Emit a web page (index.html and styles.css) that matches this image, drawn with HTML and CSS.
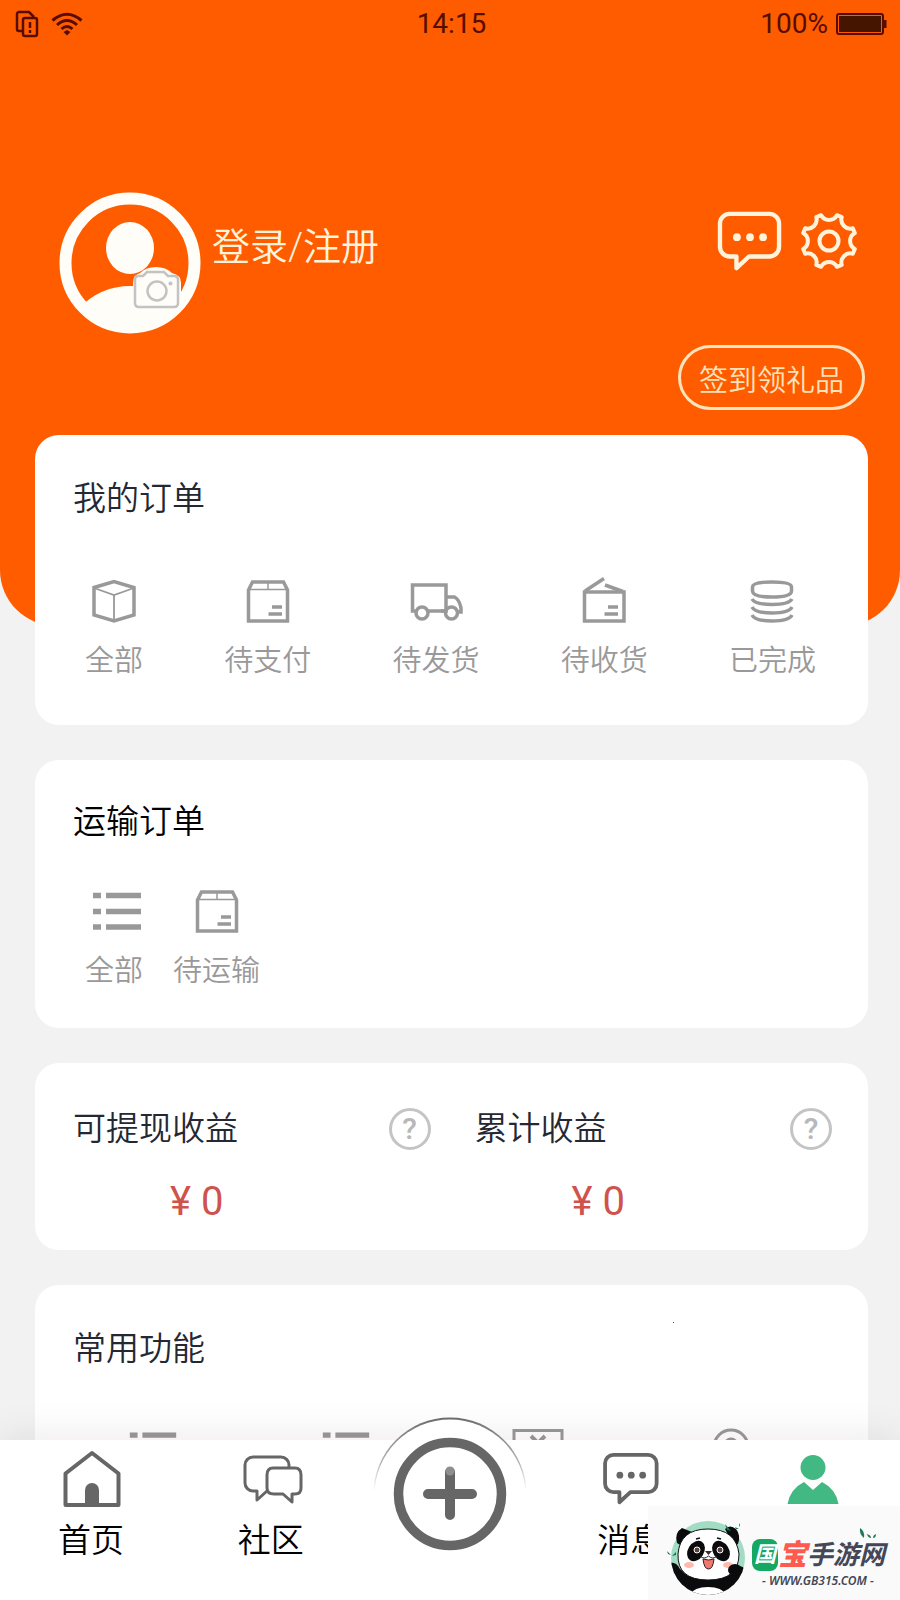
FILE: index.html
```html
<!DOCTYPE html>
<html lang="zh-CN">
<head>
<meta charset="utf-8">
<meta name="viewport" content="width=device-width, initial-scale=1">
<title>我的</title>
<link rel="stylesheet" href="styles.css">
</head>
<body>
<svg class="defs" aria-hidden="true">
  <symbol id="box" viewBox="0 0 56 56">
    <path d="M8.500 17 12.500 9h31l4 8v31h-39z" fill="none" stroke="currentColor" stroke-width="3.500"/>
    <path d="M8 16.500h40M28 9v7.500" fill="none" stroke="currentColor" stroke-width="1.500"/>
    <path d="M32 34h10M28.500 41H42" stroke="currentColor" stroke-width="3.500"/>
  </symbol>
  <symbol id="list" viewBox="0 0 56 56">
    <path d="M7 12.500h8M20 12.500h35M7 28.500h8M20 28.500h35M7 44h8M20 44h35" stroke="currentColor" stroke-width="5.500"/>
  </symbol>
  <symbol id="bubble" viewBox="0 0 68 64">
    <path d="M13 4h41a10 10 0 0 1 10 10v24a10 10 0 0 1-10 10H33L20 60V48h-7A10 10 0 0 1 3 38V14A10 10 0 0 1 13 4z" fill="none" stroke="currentColor" stroke-width="4.500" stroke-linejoin="round"/>
    <g fill="currentColor"><circle cx="20.500" cy="28" r="4"/><circle cx="34" cy="28" r="4"/><circle cx="47.500" cy="28" r="4"/></g>
  </symbol>
</svg>

<div class="app">
  <div class="scroll">
    <header class="header">
      <div class="status">
        <span class="status-left">
          <svg width="22" height="26" viewBox="0 0 22 26" fill="none" stroke="currentColor" stroke-width="2.500">
            <path d="M6 20H3a2 2 0 0 1-2-2V3a2 2 0 0 1 2-2h10l5 5"/><rect x="7" y="7" width="14" height="18" rx="2"/><path d="M14 11v6M14 19v3"/>
          </svg>
          <svg width="32" height="24" viewBox="0 0 32 24" fill="none" stroke="currentColor" stroke-width="3">
            <path d="M1.500 8.500Q16-4 30.500 8.500M6 13Q16 4 26 13M10.500 17Q16 12 21.500 17"/><path d="M16 18 19.500 20 16 23.500 12.500 20z" fill="currentColor" stroke="none"/>
          </svg>
        </span>
        <time class="clock">14:15</time>
        <span class="status-right">100%
          <svg width="51" height="22" viewBox="0 0 51 22"><rect x="1" y="1" width="46" height="20" rx="2" fill="none" stroke="currentColor" stroke-width="2"/><rect x="3" y="3" width="42" height="16" fill="#451500"/><path d="M48 7h2.500v8H48z" fill="currentColor"/></svg>
        </span>
      </div>
      <div class="profile">
        <button class="avatar" type="button" aria-label="更换头像">
          <svg width="142" height="142" viewBox="0 0 142 142">
            <defs><clipPath id="face"><circle cx="71" cy="71" r="66"/></clipPath></defs>
            <circle cx="71" cy="71" r="64.500" fill="none" stroke="#fffdf8" stroke-width="12"/>
            <ellipse cx="71" cy="56" rx="24" ry="26" fill="#fffdf8"/>
            <path d="M20 116Q42 94 71 94t51 22v26H20z" fill="#fffdf8" clip-path="url(#face)"/>
            <path d="M74 91q0-8 7-10 6-6 16-6t16 6q9 2 9 10v25H74z" fill="#fffdf8"/>
            <path d="M79 84h5l4-4h17l4 4h6q4 0 4 4v23q0 4-4 4H80q-4 0-4-4V88q0-4 3-4z" fill="none" stroke="#c3c3c3" stroke-width="2.500"/>
            <circle cx="98" cy="99" r="9.500" fill="none" stroke="#c3c3c3" stroke-width="2.500"/><circle cx="111.500" cy="91.500" r="2" fill="#c3c3c3"/>
          </svg>
        </button>
        <a class="login" href="#login">登录/注册</a>
        <div class="actions">
          <button type="button" aria-label="消息"><svg width="66" height="62"><use href="#bubble"/></svg></button>
          <button type="button" aria-label="设置">
            <svg width="60" height="60" viewBox="0 0 60 60" fill="none" stroke="currentColor" stroke-width="4" stroke-linejoin="round">
              <path d="M55.800 37.900 53.800 42.700A9 9 0 0 0 42.700 53.800L37.900 55.800A9 9 0 0 0 22.100 55.800L17.300 53.800A9 9 0 0 0 6.200 42.700L4.200 37.900A9 9 0 0 0 4.200 22.100L6.200 17.300A9 9 0 0 0 17.300 6.200L22.100 4.200A9 9 0 0 0 37.900 4.200L42.700 6.200A9 9 0 0 0 53.800 17.300L55.800 22.100A9 9 0 0 0 55.800 37.900z"/>
              <circle cx="30" cy="30" r="9.500"/>
            </svg>
          </button>
        </div>
      </div>
      <button class="checkin" type="button">签到领礼品</button>
    </header>

    <main class="cards">
      <section class="card orders">
        <h2>我的订单</h2>
        <nav class="links spread">
          <a href="#all"><svg viewBox="0 0 56 56" fill="none" stroke="currentColor" stroke-width="3.500"><path d="M8 14.500 28 8.500 48 14.500v27.500L28 48 8 42z"/><path d="M8 15 28 22 48 15M28 22v25" stroke-width="1.800"/></svg>全部</a>
          <a href="#pay"><svg><use href="#box"/></svg>待支付</a>
          <a href="#ship"><svg viewBox="0 0 56 56" fill="none" stroke="currentColor" stroke-width="3.500"><path d="M7 38H4.500V12H38v26H20"/><path d="M38 24h8.500Q51 26 53 35v4h-3M33 38h4"/><circle cx="14" cy="40" r="6"/><circle cx="43.500" cy="40" r="6"/></svg>待发货</a>
          <a href="#receive"><svg viewBox="0 0 56 56" fill="none" stroke="currentColor" stroke-width="3.500"><rect x="8.500" y="19" width="39.500" height="29"/><path d="M9 18 28 5.500M29 12 47 18.500"/><path d="M32 34h10M28.500 41H42"/></svg>待收货</a>
          <a href="#done"><svg viewBox="0 0 56 56" fill="none" stroke="currentColor" stroke-width="3.500"><path d="M8.500 14q0-5 19.500-5t19.500 5v4q0 6-19.500 6t-19.500-6z"/><path d="M8 26q3 5.500 20 5.500t20-5.500M8 34q3 6 20 6t20-6M8 42q3 6 20 6t20-6"/></svg>已完成</a>
        </nav>
      </section>

      <section class="card freight">
        <h2>运输订单</h2>
        <nav class="links">
          <a href="#freight-all"><svg><use href="#list"/></svg>全部</a>
          <a href="#freight-wait"><svg><use href="#box"/></svg>待运输</a>
        </nav>
      </section>

      <section class="card income">
        <div class="income-item">
          <h2>可提现收益</h2>
          <button type="button" class="help" aria-label="可提现收益说明">?</button>
          <p class="amount">¥ 0</p>
        </div>
        <div class="income-item">
          <h2>累计收益</h2>
          <button type="button" class="help" aria-label="累计收益说明">?</button>
          <p class="amount">¥ 0</p>
        </div>
      </section>

      <section class="card tools">
        <h2>常用功能</h2>
        <i class="speck"></i>
        <nav class="tool-grid">
          <a href="#tool1" aria-label="列表"><svg viewBox="2 0 58 56"><use href="#list" width="56" height="56"/></svg></a>
          <a href="#tool2" aria-label="明细"><svg viewBox="2 0 58 56"><use href="#list" width="56" height="56"/></svg></a>
          <a href="#tool3" aria-label="提现"><svg viewBox="0 0 56 56" fill="none" stroke="currentColor" stroke-width="3"><path d="M4 8.500h48v39H4z"/><path d="m21 14 7 7 7-7M28 21v16M20 27h16" stroke-width="4"/></svg></a>
          <a href="#tool4" aria-label="地址"><svg viewBox="0 0 56 56" fill="none" stroke="currentColor" stroke-width="3"><path d="M28 52Q11 36 11 25a17 17 0 0 1 34 0Q45 36 28 52z"/><circle cx="28" cy="23" r="6"/></svg></a>
        </nav>
      </section>
    </main>
  </div>

  <nav class="tabs">
    <a href="#home"><svg viewBox="0 0 60 60"><path d="M4.500 24.500 31 4l26.500 20.500V56h-53z" fill="none" stroke="currentColor" stroke-width="4" stroke-linejoin="round"/><path d="M24 57V41a7 7 0 0 1 14 0v16z" fill="currentColor"/></svg>首页</a>
    <a href="#community"><svg viewBox="0 0 60 60" fill="none" stroke="currentColor" stroke-width="3" stroke-linejoin="round"><path d="M48 20v-4a8 8 0 0 0-8-8H12a8 8 0 0 0-8 8v18a8 8 0 0 0 8 8h4v9l10-9"/><path d="M32 19h22q6 0 6 7v13q0 6-6 6h-3v8l-9-8H33q-7 0-7-6V26q0-7 6-7z"/></svg>社区</a>
    <a class="add" href="#publish" aria-label="发布">
      <svg viewBox="0 0 156 156">
        <defs><linearGradient id="rim" x1="0" y1="0" x2="0" y2="1"><stop offset="0" stop-color="#6b6b6b"/><stop offset=".3" stop-color="#b5b5b5"/><stop offset=".48" stop-color="#fff"/></linearGradient></defs>
        <circle cx="78" cy="78" r="76.500" fill="url(#rim)"/><circle cx="78" cy="79" r="75.500" fill="#fff"/>
        <circle cx="78" cy="78" r="51.500" fill="none" stroke="#666" stroke-width="9.500"/>
        <path d="M78 56v43M56 78h44" stroke="#666" stroke-width="10" stroke-linecap="round"/>
        <circle cx="78" cy="55" r="4.500" fill="#8e8e8e"/>
      </svg>
    </a>
    <a href="#message"><svg viewBox="-3 -1 71 67"><use href="#bubble" width="68" height="64"/></svg>消息</a>
    <a class="active" href="#mine" aria-label="我的"><svg viewBox="0 0 60 60" fill="currentColor"><circle cx="33" cy="18.500" r="12.500"/><path d="M7.500 55Q10 40 24 33l9 8 9-8q14 7 16.500 22z"/></svg></a>
  </nav>

  <aside class="brand">
    <svg class="panda" viewBox="0 0 90 85">
      <defs><clipPath id="disc"><circle cx="48" cy="43" r="37"/></clipPath></defs>
      <circle cx="48" cy="43" r="37" fill="#a3dcc4"/>
      <g clip-path="url(#disc)">
        <path d="M8 48q8-2 12 6l8 7h40l6-8q9-5 12 4v33H8z" fill="#0b0b0d"/>
        <path d="M28 85q2-13 20-13t20 13z" fill="#fff"/>
      </g>
      <path d="M17 28q-3-10 5-15l10 4-10 14zM65 14q5-5 11 0 5 6 2 15l-4 2z" fill="#0b0b0d"/>
      <path d="M18 39q2-25 30-25t31 25q0 26-31 26T18 39z" fill="#fff" stroke="#111" stroke-width="1"/>
      <ellipse cx="36" cy="36" rx="8" ry="11" transform="rotate(32 36 36)" fill="#0b0b0d"/>
      <ellipse cx="61" cy="36" rx="8" ry="11" transform="rotate(-32 61 36)" fill="#0b0b0d"/>
      <g fill="#57443c" stroke="#fff"><circle cx="37" cy="35" r="3"/><circle cx="60" cy="35" r="3"/></g>
      <path d="m36 24 4-1M57 23l4 1" stroke="#111" stroke-width="1.500"/>
      <path d="M45 36h7l-3.500 4z" fill="#3b2a2a"/>
      <path d="M40 41q4 4 8.500 0 4.500 4 8.500 0" fill="none" stroke="#222"/>
      <path d="M43 44q5.500 2 11 0-1 10-5.500 10T43 44z" fill="#f17670" stroke="#222"/>
      <ellipse cx="29" cy="50" rx="5" ry="3" fill="#ffb9ab"/><ellipse cx="68" cy="50" rx="5" ry="3" fill="#ffb9ab"/>
      <ellipse cx="75" cy="55" rx="7" ry="6" fill="#0b0b0d"/>
      <path d="m65 9 6 7-4-1zM12 41l4-4 0 3zM7 36l4 4-3-1zM75 12l4 2-3 0zM79 8l0 4 1-2z" fill="#17764f"/>
    </svg>
    <div class="brand-text">
      <svg class="leaves" width="18" height="12" viewBox="0 0 18 12"><path d="M1 0q5 3 4 10Q0 6 1 0zM8 6q4 1 4 4-3 0-4-4zM17 6q0 4-3 4 0-3 3-4z" fill="#237a5a"/></svg>
      <p class="brand-name"><span class="g">国</span><span class="r">宝</span><span>手游网</span></p>
      <p class="brand-url">- WWW.GB315.COM -</p>
    </div>
  </aside>
</div>
</body>
</html>
```

FILE: styles.css
```css
* { box-sizing: border-box; }

body {
  margin: 0;
  background: #f2f2f2;
  color: #000;
  font-family: Roboto, "Noto Sans CJK SC", sans-serif;
  font-weight: 350;
}

h2, p { margin: 0; }
a { color: inherit; text-decoration: none; }
svg { display: block; flex: none; overflow: visible; }
.defs { position: absolute; width: 0; height: 0; }

button {
  padding: 0;
  border: 0;
  background: none;
  color: inherit;
  font: inherit;
  cursor: pointer;
}

.app {
  position: relative;
  display: flex;
  flex-direction: column;
  height: 100vh;
  overflow: hidden;
}

.scroll {
  flex: 1;
  min-height: 0;
  overflow: hidden;
}

/* Header */
.header {
  display: flex;
  flex-direction: column;
  padding-bottom: 216px;
  border-radius: 0 0 56px 56px;
  background: #ff5c00;
  color: #fff3dc;
}

.status {
  display: grid;
  grid-template-columns: 1fr auto 1fr;
  align-items: center;
  height: 48px;
  padding: 0 13px 0 16px;
  color: #560d00;
  font-size: 28px;
  font-weight: 400;
  line-height: 32px;
}

.status-left, .status-right {
  display: flex;
  align-items: center;
  gap: 13px;
}

.status-right {
  justify-content: flex-end;
  gap: 8px;
}

.profile {
  display: flex;
  align-items: flex-start;
  padding: 144px 41px 0 59px;
}

.login {
  margin: 27px 0 0 11px;
  font-size: 38px;
  line-height: 56px;
}

.actions {
  display: flex;
  align-items: center;
  gap: 16px;
  margin: 18px 0 0 auto;
}

.checkin {
  align-self: flex-end;
  height: 65px;
  margin: 11px 35px 0 0;
  padding: 0 18px;
  border: 3px solid #ffe3bd;
  border-radius: 33px;
  color: #ffe3bd;
  font-size: 29px;
}

/* Cards */
.cards {
  display: flex;
  flex-direction: column;
  gap: 35px;
  margin-top: -191px;
  padding: 0 32px 0 35px;
}

.card {
  padding: 40px 38px;
  border-radius: 24px;
  background: #fff;
}

.card h2 {
  color: #242833;
  font-size: 33px;
  font-weight: inherit;
  line-height: 48px;
}

.card.freight h2 { color: #000; }

.links {
  display: flex;
  gap: 30px;
  padding: 0 14px 0 12px;
  color: #999;
  font-size: 29px;
  line-height: 40px;
}

.links.spread {
  justify-content: space-between;
  gap: 0;
}

.links a {
  display: flex;
  flex-direction: column;
  align-items: center;
  gap: 12px;
}

.card svg {
  width: 56px;
  height: 56px;
}

.orders { padding-bottom: 44px; }
.orders .links { margin-top: 50px; }
.freight { padding-top: 38px; padding-bottom: 37px; }
.freight .links { margin-top: 37px; }

.income {
  display: grid;
  grid-template-columns: 1fr 1fr;
  gap: 44px;
  padding: 42px 36px 24px 38px;
}

.income-item {
  display: grid;
  grid-template-columns: 1fr auto;
  align-items: center;
  row-gap: 25px;
}

.help {
  width: 42px;
  height: 42px;
  border: 3px solid #c4c4c4;
  border-radius: 50%;
  color: #b8b8b8;
  font-size: 30px;
  font-weight: 500;
  line-height: 36px;
}

.amount {
  grid-column: 1 / -1;
  padding-left: 97px;
  color: #d0524c;
  font-size: 40px;
  font-weight: 400;
  line-height: 48px;
}

.tools { position: relative; }

.speck {
  position: absolute;
  top: 37px;
  right: 194px;
  width: 1px;
  height: 1px;
  background: #3a3aa0;
}

.tool-grid {
  display: grid;
  grid-template-columns: repeat(4, 1fr);
  justify-items: center;
  margin: 49px 3px 0 -16px;
  color: #999;
}

/* Bottom tab bar */
.tabs {
  position: relative;
  display: grid;
  grid-template-columns: repeat(5, 1fr);
  height: 160px;
  padding-left: 1px;
  background: #fff;
  box-shadow: 0 0 40px rgba(50, 20, 20, 0.1);
  font-size: 33px;
  line-height: 48px;
}

.tabs a {
  display: flex;
  flex-direction: column;
  align-items: center;
  gap: 8px;
  padding-top: 9px;
}

.tabs a svg {
  width: 60px;
  height: 60px;
  color: #666;
}

.tabs .add {
  margin-top: -24px;
  padding-top: 0;
}

.tabs .add svg {
  width: 156px;
  height: 156px;
}

.tabs .active svg { color: #42b883; }

/* Site badge over the lower right corner */
.brand {
  position: absolute;
  right: 0;
  bottom: 0;
  display: flex;
  align-items: flex-start;
  width: 252px;
  height: 94px;
  padding: 9px 0 0 12px;
  background: #fafafa;
  color: #434758;
}

.panda {
  width: 90px;
  height: 85px;
}

.brand-text { position: relative; }

.leaves {
  position: absolute;
  top: 13px;
  right: 8px;
}

.brand-name {
  display: flex;
  align-items: center;
  padding-top: 22px;
  font-size: 26px;
  font-style: italic;
  font-weight: 700;
  line-height: 36px;
}

.brand-name .g {
  margin-left: 2px;
  padding: 0 2px;
  border-radius: 8px;
  background: #16a765;
  color: #fff;
  font-size: 22px;
  line-height: 32px;
}

.brand-name .r {
  color: #ff5a50;
  font-size: 29px;
  font-weight: 900;
}

.brand-url {
  padding-left: 12px;
  font-family: "Noto Sans", sans-serif;
  font-size: 12px;
  font-style: italic;
  font-weight: 600;
  line-height: 16px;
}
```
